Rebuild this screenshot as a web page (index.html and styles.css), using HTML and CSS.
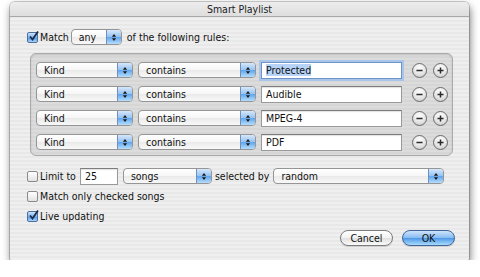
FILE: index.html
```html
<!DOCTYPE html>
<html lang="en">

<head>
    <meta charset="UTF-8">
    <title>Smart Playlist</title>
    <link rel="stylesheet" href="styles.css">
</head>

<body>
    <div class="window">
        <header class="titlebar">Smart Playlist</header>

        <main class="content">
            <div class="match-row">
                <span class="check on"><svg viewBox="0 0 11 11"><path d="M2 5.5 L4.5 8.5 L10 0.5" /></svg></span>
                <span class="txt">Match</span>
                <div class="popup any">
                    <span class="label">any</span>
                    <span class="arrows"><svg viewBox="0 0 7 10"><path d="M1 4 L3.5 1 L6 4 Z M1 6 L3.5 9 L6 6 Z" /></svg></span>
                </div>
                <span class="txt">of the following rules:</span>
            </div>

            <section class="rules">
                <div class="rule">
                    <div class="popup field-kind"><span class="label">Kind</span><span class="arrows"><svg viewBox="0 0 7 10"><path d="M1 4 L3.5 1 L6 4 Z M1 6 L3.5 9 L6 6 Z" /></svg></span></div>
                    <div class="popup field-op"><span class="label">contains</span><span class="arrows"><svg viewBox="0 0 7 10"><path d="M1 4 L3.5 1 L6 4 Z M1 6 L3.5 9 L6 6 Z" /></svg></span></div>
                    <div class="textbox focus"><span class="sel">Protected</span></div>
                    <span class="round"><svg viewBox="0 0 15 15"><path d="M4 7.5 H11" /></svg></span>
                    <span class="round"><svg viewBox="0 0 15 15"><path d="M4 7.5 H11 M7.5 4 V11" /></svg></span>
                </div>
                <div class="rule">
                    <div class="popup field-kind"><span class="label">Kind</span><span class="arrows"><svg viewBox="0 0 7 10"><path d="M1 4 L3.5 1 L6 4 Z M1 6 L3.5 9 L6 6 Z" /></svg></span></div>
                    <div class="popup field-op"><span class="label">contains</span><span class="arrows"><svg viewBox="0 0 7 10"><path d="M1 4 L3.5 1 L6 4 Z M1 6 L3.5 9 L6 6 Z" /></svg></span></div>
                    <div class="textbox">Audible</div>
                    <span class="round"><svg viewBox="0 0 15 15"><path d="M4 7.5 H11" /></svg></span>
                    <span class="round"><svg viewBox="0 0 15 15"><path d="M4 7.5 H11 M7.5 4 V11" /></svg></span>
                </div>
                <div class="rule">
                    <div class="popup field-kind"><span class="label">Kind</span><span class="arrows"><svg viewBox="0 0 7 10"><path d="M1 4 L3.5 1 L6 4 Z M1 6 L3.5 9 L6 6 Z" /></svg></span></div>
                    <div class="popup field-op"><span class="label">contains</span><span class="arrows"><svg viewBox="0 0 7 10"><path d="M1 4 L3.5 1 L6 4 Z M1 6 L3.5 9 L6 6 Z" /></svg></span></div>
                    <div class="textbox">MPEG-4</div>
                    <span class="round"><svg viewBox="0 0 15 15"><path d="M4 7.5 H11" /></svg></span>
                    <span class="round"><svg viewBox="0 0 15 15"><path d="M4 7.5 H11 M7.5 4 V11" /></svg></span>
                </div>
                <div class="rule">
                    <div class="popup field-kind"><span class="label">Kind</span><span class="arrows"><svg viewBox="0 0 7 10"><path d="M1 4 L3.5 1 L6 4 Z M1 6 L3.5 9 L6 6 Z" /></svg></span></div>
                    <div class="popup field-op"><span class="label">contains</span><span class="arrows"><svg viewBox="0 0 7 10"><path d="M1 4 L3.5 1 L6 4 Z M1 6 L3.5 9 L6 6 Z" /></svg></span></div>
                    <div class="textbox">PDF</div>
                    <span class="round"><svg viewBox="0 0 15 15"><path d="M4 7.5 H11" /></svg></span>
                    <span class="round"><svg viewBox="0 0 15 15"><path d="M4 7.5 H11 M7.5 4 V11" /></svg></span>
                </div>
            </section>

            <div class="limit-row">
                <span class="check"></span>
                <span class="txt">Limit to</span>
                <div class="textbox limit">25</div>
                <div class="popup songs"><span class="label">songs</span><span class="arrows"><svg viewBox="0 0 7 10"><path d="M1 4 L3.5 1 L6 4 Z M1 6 L3.5 9 L6 6 Z" /></svg></span></div>
                <span class="txt by">selected by</span>
                <div class="popup random"><span class="label">random</span><span class="arrows"><svg viewBox="0 0 7 10"><path d="M1 4 L3.5 1 L6 4 Z M1 6 L3.5 9 L6 6 Z" /></svg></span></div>
            </div>

            <div class="check-row">
                <span class="check"></span>
                <span class="txt">Match only checked songs</span>
            </div>
            <div class="check-row">
                <span class="check on"><svg viewBox="0 0 11 11"><path d="M2 5.5 L4.5 8.5 L10 0.5" /></svg></span>
                <span class="txt">Live updating</span>
            </div>

            <div class="buttons">
                <button class="btn">Cancel</button>
                <button class="btn default">OK</button>
            </div>
        </main>
    </div>
</body>

</html>
```

FILE: styles.css
```css
* {
    box-sizing: border-box;
    margin: 0;
    padding: 0;
}

body {
    background: #fff;
    font-family: "DejaVu Sans Condensed", "DejaVu Sans", sans-serif;
    font-size: 10.5px;
    color: #111;
}

.window {
    width: 459px;
    height: 258px;
    margin: 2px 0 0 10px;
    border-radius: 5px 5px 2px 2px;
    display: flex;
    flex-direction: column;
    overflow: hidden;
    background: repeating-linear-gradient(#efefef 0 2px, #e8e8e8 2px 4px);
    box-shadow: 0 0 0 1px rgba(0, 0, 0, 0.18), 1px 4px 9px rgba(0, 0, 0, 0.55);
}

.titlebar {
    height: 15px;
    text-align: center;
    line-height: 14px;
    color: #222;
    background: linear-gradient(#ededed, #dedede);
    border-bottom: 1px solid #a8a8a8;
}

.content {
    flex: 1;
    padding: 12px 14px 0 17px;
    display: flex;
    flex-direction: column;
}

.txt {
    white-space: nowrap;
}

/* checkboxes */
.check {
    width: 11px;
    height: 11px;
    border: 1px solid #8a8a8a;
    border-radius: 2px;
    background: linear-gradient(#ffffff, #e2e2e2);
    display: inline-flex;
    flex: none;
}

.check.on {
    border-color: #4b6f9f;
    background: linear-gradient(#cfe3fb, #7bb1ec 50%, #4f95e4 51%, #a9d4fb);
}

.check svg {
    width: 11px;
    height: 11px;
    margin: -2px 0 0 0;
    overflow: visible;
}

.check path {
    fill: none;
    stroke: #1b2c48;
    stroke-width: 1.8;
}

/* aqua popups */
.popup {
    display: flex;
    height: 16px;
    border: 1px solid #959595;
    border-radius: 4px;
    overflow: hidden;
    background: linear-gradient(#ffffff, #f6f6f6 50%, #eaeaea 51%, #f8f8f8);
    flex: none;
}

.popup .label {
    flex: 1;
    padding-left: 7px;
    line-height: 14px;
    white-space: nowrap;
}

.popup .arrows {
    width: 15px;
    border-left: 1px solid #6f8fbd;
    background: linear-gradient(#d6e8fc, #93c2f1 50%, #5fa4ec 51%, #b6ddfd);
    display: flex;
    align-items: center;
    justify-content: center;
}

.arrows svg {
    width: 6px;
    height: 9px;
}

.arrows path {
    fill: #1c1c1c;
}

/* text fields */
.textbox {
    height: 17px;
    background: #fff;
    border: 1px solid #9a9a9a;
    border-top-color: #7d7d7d;
    box-shadow: inset 0 1px 1px rgba(0, 0, 0, 0.12);
    padding-left: 4px;
    line-height: 15px;
    flex: none;
}

.textbox.focus {
    border-color: #6f93c6;
    box-shadow: 0 0 0 2px #a8c6ec;
}

.sel {
    background: #b7d4f8;
}

/* top row */
.match-row {
    display: flex;
    align-items: center;
    height: 16px;
}

.match-row .txt {
    margin-left: 2px;
}

.popup.any {
    width: 51px;
    margin: 0 3px 0 2px;
}

/* rules box */
.rules {
    margin: 8px 0 0 3px;
    width: 423px;
    height: 103px;
    border: 1px solid #aaaaaa;
    border-radius: 6px;
    background: repeating-linear-gradient(#dcdcdc 0 2px, #d6d6d6 2px 4px);
    box-shadow: inset 0 1px 2px rgba(0, 0, 0, 0.12);
    padding: 4px 0 0 5px;
}

.rule {
    display: flex;
    align-items: center;
    height: 24px;
}

.field-kind {
    width: 97px;
}

.field-op {
    width: 118px;
    margin-left: 5px;
}

.rule .textbox {
    width: 141px;
    margin-left: 5px;
}

.round {
    width: 15px;
    height: 15px;
    border-radius: 50%;
    border: 1px solid #6a6a6a;
    background: radial-gradient(circle at 50% 30%, #ffffff, #e6e6e6 55%, #bdbdbd);
    display: inline-flex;
    flex: none;
    margin-left: 6px;
}

.rule .textbox + .round {
    margin-left: 10px;
}

.round svg {
    width: 13px;
    height: 13px;
}

.round path {
    stroke: #2a2a2a;
    stroke-width: 1.8;
}

/* limit row */
.limit-row {
    display: flex;
    align-items: center;
    height: 18px;
    margin-top: 11px;
}

.limit-row .txt {
    margin: 0 4px 0 2px;
}

.limit-row .txt.by {
    margin-left: 3px;
}

.textbox.limit {
    width: 38px;
    margin-right: 5px;
}

.popup.songs {
    width: 89px;
}

.popup.random {
    width: 171px;
}

.check-row {
    display: flex;
    align-items: center;
    height: 18px;
    margin-top: 2px;
}

.check-row .txt {
    margin-left: 2px;
}

/* buttons */
.buttons {
    display: flex;
    justify-content: flex-end;
    gap: 9px;
    margin-top: 5px;
}

.btn {
    width: 53px;
    height: 16px;
    border-radius: 8px;
    border: 1px solid #7c7c7c;
    font-family: "DejaVu Sans Condensed", "DejaVu Sans", sans-serif;
    font-size: 10.5px;
    color: #111;
    background: linear-gradient(#ffffff, #f2f2f2 50%, #e0e0e0 51%, #fafafa);
    box-shadow: 0 1px 1px rgba(0, 0, 0, 0.15);
}

.btn.default {
    border-color: #41649a;
    background: linear-gradient(#cfe4fc, #84bbf2 50%, #4e97e8 51%, #a8dbfd);
}
```
